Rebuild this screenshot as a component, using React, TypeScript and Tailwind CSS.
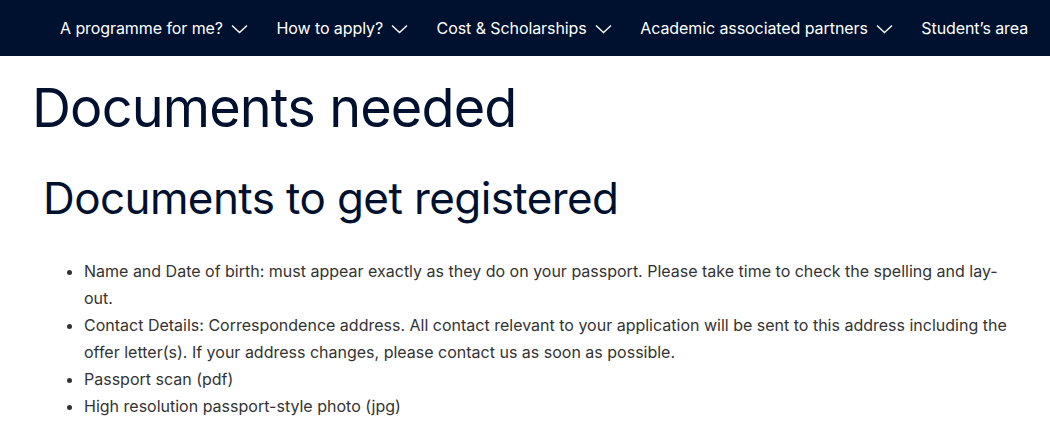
const navItems = [
  { label: "A programme for me?", menu: true },
  { label: "How to apply?", menu: true },
  { label: "Cost & Scholarships", menu: true },
  { label: "Academic associated partners", menu: true },
  { label: "Student\u2019s area", menu: false },
];

const docs = [
  "Name and Date of birth: must appear exactly as they do on your passport. Please take time to check the spelling and lay-out.",
  "Contact Details: Correspondence address. All contact relevant to your application will be sent to this address including the offer letter(s). If your address changes, please contact us as soon as possible.",
  "Passport scan (pdf)",
  "High resolution passport-style photo (jpg)",
];

function Chevron() {
  return (
    <svg width="17" height="10" viewBox="0 0 17 10" fill="none" className="mt-[1px]">
      <path d="M1 1.5l7.5 7 7.5-7" stroke="currentColor" strokeWidth="1.4" />
    </svg>
  );
}

export default function App() {
  return (
    <div className="min-h-screen bg-white font-['Inter','Liberation_Sans',sans-serif]">
      <nav className="h-14 bg-[#00112f] flex items-center pl-[60px] gap-[28.5px] whitespace-nowrap overflow-hidden">
        {navItems.map((item) => (
          <a
            key={item.label}
            href="#"
            className="flex items-center gap-[8px] text-white text-[16px] tracking-[-0.08px]"
          >
            {item.label}
            {item.menu && <Chevron />}
          </a>
        ))}
      </nav>

      <main className="px-8 text-[#00112f]">
        <h1 className="text-[54px] leading-none font-normal mt-[25px] tracking-[-0.85px]">
          Documents needed
        </h1>
        <section className="pl-[11px]">
          <h2 className="text-[44px] leading-none font-normal mt-[41px] tracking-[-0.6px]">
            Documents to get registered
          </h2>
          <ul className="list-disc pl-[41px] mt-[38px] text-[16px] leading-[27px] text-[#333]">
            {docs.map((d) => (
              <li key={d}>{d}</li>
            ))}
          </ul>
        </section>
      </main>
    </div>
  );
}
